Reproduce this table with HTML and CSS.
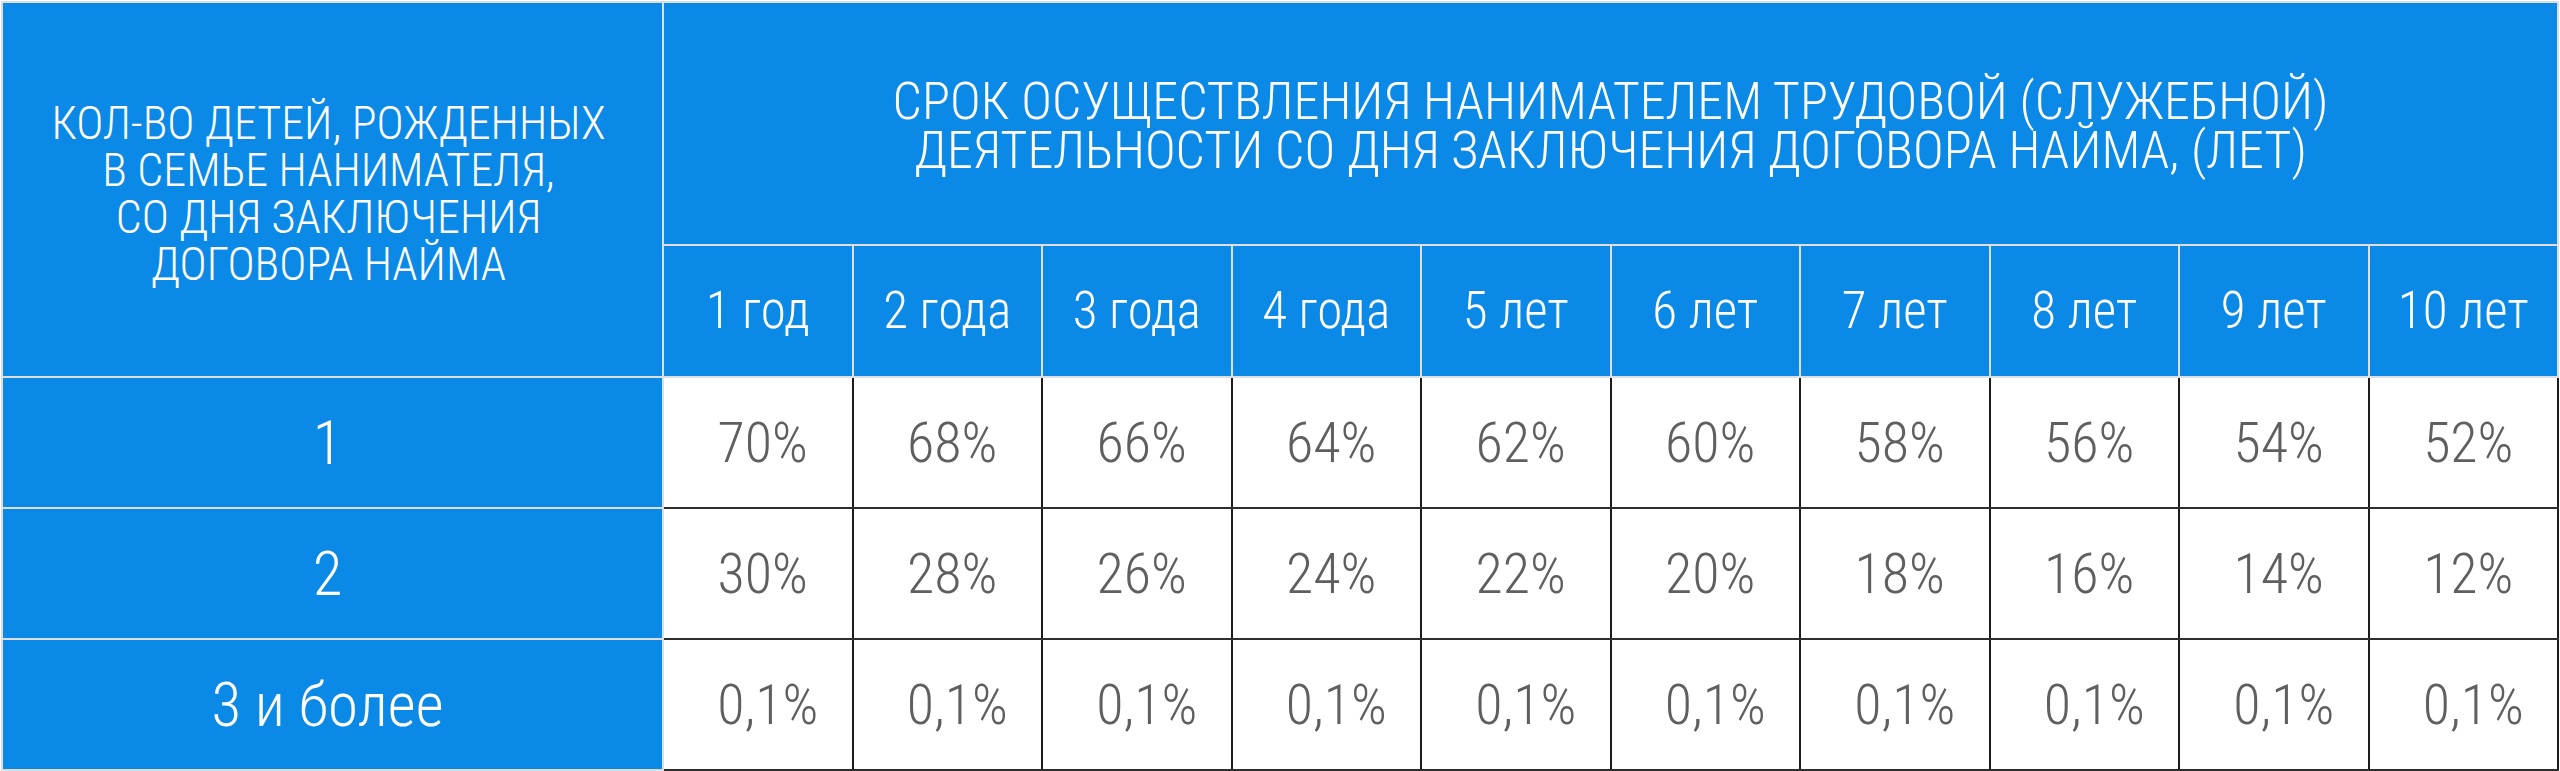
FILE: index.html
```html
<!DOCTYPE html>
<html lang="ru">
<head>
<meta charset="utf-8">
<title>Таблица</title>
<link rel="stylesheet" href="styles.css">
</head>
<body>
<table class="grid">
  <colgroup>
    <col class="c-label">
    <col class="c-year"><col class="c-year"><col class="c-year"><col class="c-year"><col class="c-year">
    <col class="c-year"><col class="c-year"><col class="c-year"><col class="c-year"><col class="c-year">
  </colgroup>
  <tr class="r-title">
    <th class="h h-label" rowspan="2"><span class="cx">КОЛ-ВО ДЕТЕЙ, РОЖДЕННЫХ<br>В СЕМЬЕ НАНИМАТЕЛЯ,<br>СО ДНЯ ЗАКЛЮЧЕНИЯ<br>ДОГОВОРА НАЙМА</span></th>
    <th class="h h-title" colspan="10"><span class="cx">СРОК ОСУЩЕСТВЛЕНИЯ НАНИМАТЕЛЕМ ТРУДОВОЙ (СЛУЖЕБНОЙ)<br>ДЕЯТЕЛЬНОСТИ СО ДНЯ ЗАКЛЮЧЕНИЯ ДОГОВОРА НАЙМА, (ЛЕТ)</span></th>
  </tr>
  <tr class="r-years">
    <th class="h h-year"><span class="cx">1 год</span></th>
    <th class="h h-year"><span class="cx">2 года</span></th>
    <th class="h h-year"><span class="cx">3 года</span></th>
    <th class="h h-year"><span class="cx">4 года</span></th>
    <th class="h h-year"><span class="cx">5 лет</span></th>
    <th class="h h-year"><span class="cx">6 лет</span></th>
    <th class="h h-year"><span class="cx">7 лет</span></th>
    <th class="h h-year"><span class="cx">8 лет</span></th>
    <th class="h h-year"><span class="cx">9 лет</span></th>
    <th class="h h-year"><span class="cx">10 лет</span></th>
  </tr>
  <tr class="r-data">
    <th class="h h-row"><span class="cx">1</span></th>
    <td class="v"><span class="cx">70%</span></td>
    <td class="v"><span class="cx">68%</span></td>
    <td class="v"><span class="cx">66%</span></td>
    <td class="v"><span class="cx">64%</span></td>
    <td class="v"><span class="cx">62%</span></td>
    <td class="v"><span class="cx">60%</span></td>
    <td class="v"><span class="cx">58%</span></td>
    <td class="v"><span class="cx">56%</span></td>
    <td class="v"><span class="cx">54%</span></td>
    <td class="v"><span class="cx">52%</span></td>
  </tr>
  <tr class="r-data">
    <th class="h h-row"><span class="cx">2</span></th>
    <td class="v"><span class="cx">30%</span></td>
    <td class="v"><span class="cx">28%</span></td>
    <td class="v"><span class="cx">26%</span></td>
    <td class="v"><span class="cx">24%</span></td>
    <td class="v"><span class="cx">22%</span></td>
    <td class="v"><span class="cx">20%</span></td>
    <td class="v"><span class="cx">18%</span></td>
    <td class="v"><span class="cx">16%</span></td>
    <td class="v"><span class="cx">14%</span></td>
    <td class="v"><span class="cx">12%</span></td>
  </tr>
  <tr class="r-data r-last">
    <th class="h h-row"><span class="cx">3 и более</span></th>
    <td class="v"><span class="cx">0,1%</span></td>
    <td class="v"><span class="cx">0,1%</span></td>
    <td class="v"><span class="cx">0,1%</span></td>
    <td class="v"><span class="cx">0,1%</span></td>
    <td class="v"><span class="cx">0,1%</span></td>
    <td class="v"><span class="cx">0,1%</span></td>
    <td class="v"><span class="cx">0,1%</span></td>
    <td class="v"><span class="cx">0,1%</span></td>
    <td class="v"><span class="cx">0,1%</span></td>
    <td class="v"><span class="cx">0,1%</span></td>
  </tr>
</table>
</body>
</html>
```

FILE: styles.css
```css
html, body {
  margin: 0;
  background: #ffffff;
}

body {
  padding: 1px;
}

.grid {
  border-collapse: collapse;
  table-layout: fixed;
  width: 2556px;
  font-family: Roboto, "Liberation Sans", sans-serif;
  font-weight: 300;
  font-stretch: 87%;
}

.c-label { width: 661px; }
.c-year { width: 189.5px; }

.r-title { height: 243px; }
.r-years { height: 132px; }
.r-data { height: 131px; }

.cx {
  display: inline-block;
}

.h {
  background: #0b89e7;
  color: #ffffff;
  border: 2px solid #dedede;
  font-weight: 300;
  text-align: center;
  vertical-align: middle;
  padding: 0;
}

.h-label {
  font-size: 46px;
  line-height: 47px;
  padding: 9px 8px 0 0;
}

.h-title {
  font-size: 52px;
  line-height: 49px;
  padding-top: 4px;
}

.h-year {
  font-size: 51px;
  line-height: 56px;
}

.h-row {
  font-size: 61px;
  line-height: 64px;
  padding-right: 10px;
}

.v {
  background: #ffffff;
  color: #5f5f5f;
  font-size: 56px;
  line-height: 64px;
  text-align: center;
  vertical-align: middle;
  padding: 0 0 0 10px;
  border-left: 2px solid #1c1c1c;
  border-right: 2px solid #1c1c1c;
  border-top: 2px solid #2e2e2e;
  border-bottom: 2px solid #2e2e2e;
}

.r-last .v {
  padding-left: 20px;
}
```
